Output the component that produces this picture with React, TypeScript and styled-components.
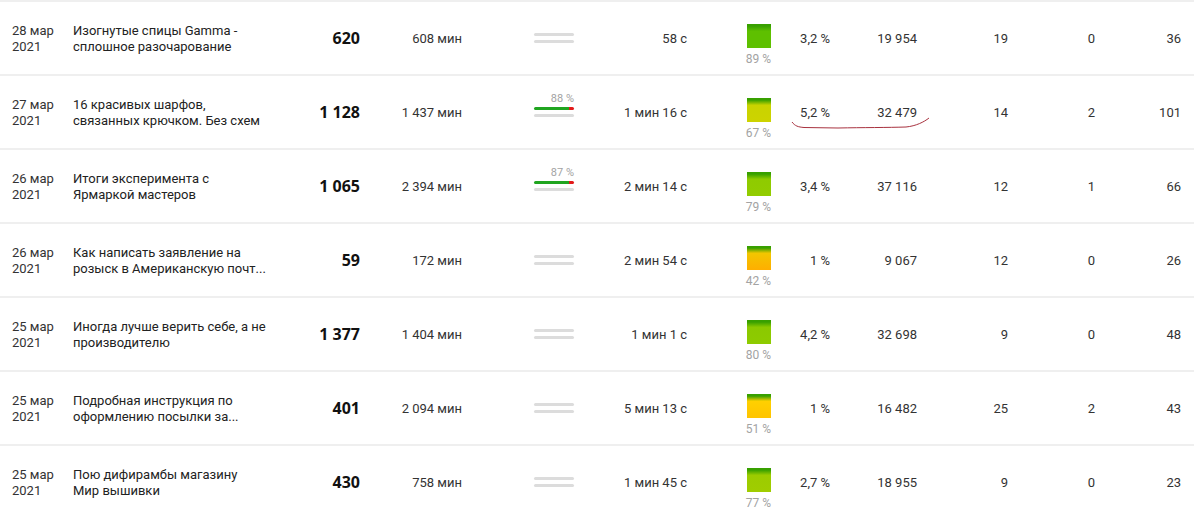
import React from 'react'
import styled, { createGlobalStyle } from 'styled-components'

const GlobalStyle = createGlobalStyle`
  body {
    margin: 0;
    background: #fff;
    font-family: Roboto, "Open Sans", Arial, sans-serif;
    color: #222;
  }
`

const Table = styled.div`
  position: relative;
  width: 1194px;
`

const Row = styled.div`
  display: grid;
  grid-template-columns: 73px 217px 70px 102px 112px 156px 57px 43px 87px 91px 87px 86px 13px;
  height: 74px;
  box-sizing: border-box;
  border-top: 2px solid #efefef;
  align-items: center;
  font-size: 13px;
`

const DateCell = styled.div`
  padding-left: 12px;
  padding-top: 2px;
  line-height: 16px;
  color: #333;
`

const Title = styled.div`
  padding-top: 2px;
  line-height: 16px;
  color: #222;
`

const Views = styled.div`
  text-align: right;
  font-family: "Open Sans", Arial, sans-serif;
  font-size: 16px;
  font-weight: 700;
  color: #111;
`

const Num = styled.div<{ $pad?: number }>`
  text-align: right;
  padding-right: ${p => p.$pad || 0}px;
  color: #333;
  white-space: nowrap;
`

const BarCell = styled.div`
  display: flex;
  justify-content: flex-end;
`

const BarBox = styled.div`
  width: 40px;
  display: flex;
  flex-direction: column;
  gap: 4px;
  padding-bottom: 16px;
`

const BarLabel = styled.div`
  height: 12px;
  margin-bottom: -1px;
  font-size: 11px;
  line-height: 14px;
  color: #a3a3a3;
  text-align: right;
`

const Bar = styled.div<{ $pct?: number }>`
  height: 3px;
  border-radius: 2px;
  background: ${p =>
    p.$pct
      ? `linear-gradient(to right, #20a520 0, #20a520 ${p.$pct}%, #e21a1a ${p.$pct}%, #e21a1a 100%)`
      : '#dcdcdc'};
`

const SquareCell = styled.div`
  align-self: start;
  padding-top: 22px;
  display: flex;
  flex-direction: column;
  align-items: center;
  gap: 4px;
`

const Square = styled.div<{ $mid: string; $bottom: string }>`
  width: 24px;
  height: 24px;
  background: linear-gradient(
    to bottom,
    #38a000 0,
    #38a000 2px,
    ${p => p.$mid} 30%,
    ${p => p.$bottom} 100%
  );
`

const SquarePct = styled.div`
  font-size: 12px;
  line-height: 14px;
  color: #a3a3a3;
`

const Scribble = styled.svg`
  position: absolute;
  left: 788px;
  top: 112px;
  pointer-events: none;
`

type Item = {
  date: string
  title: string[]
  views: string
  minutes: string
  bar?: number
  time: string
  mid: string
  bottom: string
  sq: number
  pct: string
  count: string
  a: string
  b: string
  c: string
}

const items: Item[] = [
  { date: '28 мар', title: ['Изогнутые спицы Gamma -', 'сплошное разочарование'], views: '620', minutes: '608 мин', time: '58 с', mid: '#5ec000', bottom: '#5ec000', sq: 89, pct: '3,2 %', count: '19 954', a: '19', b: '0', c: '36' },
  { date: '27 мар', title: ['16 красивых шарфов,', 'связанных крючком. Без схем'], views: '1 128', minutes: '1 437 мин', bar: 88, time: '1 мин 16 с', mid: '#c9d300', bottom: '#cdd300', sq: 67, pct: '5,2 %', count: '32 479', a: '14', b: '2', c: '101' },
  { date: '26 мар', title: ['Итоги эксперимента с', 'Ярмаркой мастеров'], views: '1 065', minutes: '2 394 мин', bar: 87, time: '2 мин 14 с', mid: '#8fcb00', bottom: '#92cc00', sq: 79, pct: '3,4 %', count: '37 116', a: '12', b: '1', c: '66' },
  { date: '26 мар', title: ['Как написать заявление на', 'розыск в Американскую почт...'], views: '59', minutes: '172 мин', time: '2 мин 54 с', mid: '#f2c600', bottom: '#ffae00', sq: 42, pct: '1 %', count: '9 067', a: '12', b: '0', c: '26' },
  { date: '25 мар', title: ['Иногда лучше верить себе, а не', 'производителю'], views: '1 377', minutes: '1 404 мин', time: '1 мин 1 с', mid: '#8bc900', bottom: '#8ecb00', sq: 80, pct: '4,2 %', count: '32 698', a: '9', b: '0', c: '48' },
  { date: '25 мар', title: ['Подробная инструкция по', 'оформлению посылки за...'], views: '401', minutes: '2 094 мин', time: '5 мин 13 с', mid: '#ffd000', bottom: '#ffc400', sq: 51, pct: '1 %', count: '16 482', a: '25', b: '2', c: '43' },
  { date: '25 мар', title: ['Пою дифирамбы магазину', 'Мир вышивки'], views: '430', minutes: '758 мин', time: '1 мин 45 с', mid: '#9ccc00', bottom: '#a0cd00', sq: 77, pct: '2,7 %', count: '18 955', a: '9', b: '0', c: '23' },
]

export default function App() {
  return (
    <>
      <GlobalStyle />
      <Table>
        {items.map((it, i) => (
          <Row key={i}>
            <DateCell>
              {it.date}
              <br />
              2021
            </DateCell>
            <Title>
              {it.title[0]}
              <br />
              {it.title[1]}
            </Title>
            <Views>{it.views}</Views>
            <Num>{it.minutes}</Num>
            <BarCell>
              <BarBox>
                <BarLabel>{it.bar ? `${it.bar} %` : ''}</BarLabel>
                <Bar $pct={it.bar} />
                <Bar />
              </BarBox>
            </BarCell>
            <Num $pad={43}>{it.time}</Num>
            <SquareCell>
              <Square $mid={it.mid} $bottom={it.bottom} />
              <SquarePct>{it.sq} %</SquarePct>
            </SquareCell>
            <Num>{it.pct}</Num>
            <Num>{it.count}</Num>
            <Num>{it.a}</Num>
            <Num>{it.b}</Num>
            <Num>{it.c}</Num>
            <div />
          </Row>
        ))}
        <Scribble width="145" height="20" viewBox="0 0 145 20">
          <path
            d="M4 10 C7 14 10 15 16 15.5 L50 16 C75 15.5 100 15.6 118 15 C128 14 136 10 141 6"
            fill="none"
            stroke="#a8323f"
            strokeWidth="1"
          />
        </Scribble>
      </Table>
    </>
  )
}
